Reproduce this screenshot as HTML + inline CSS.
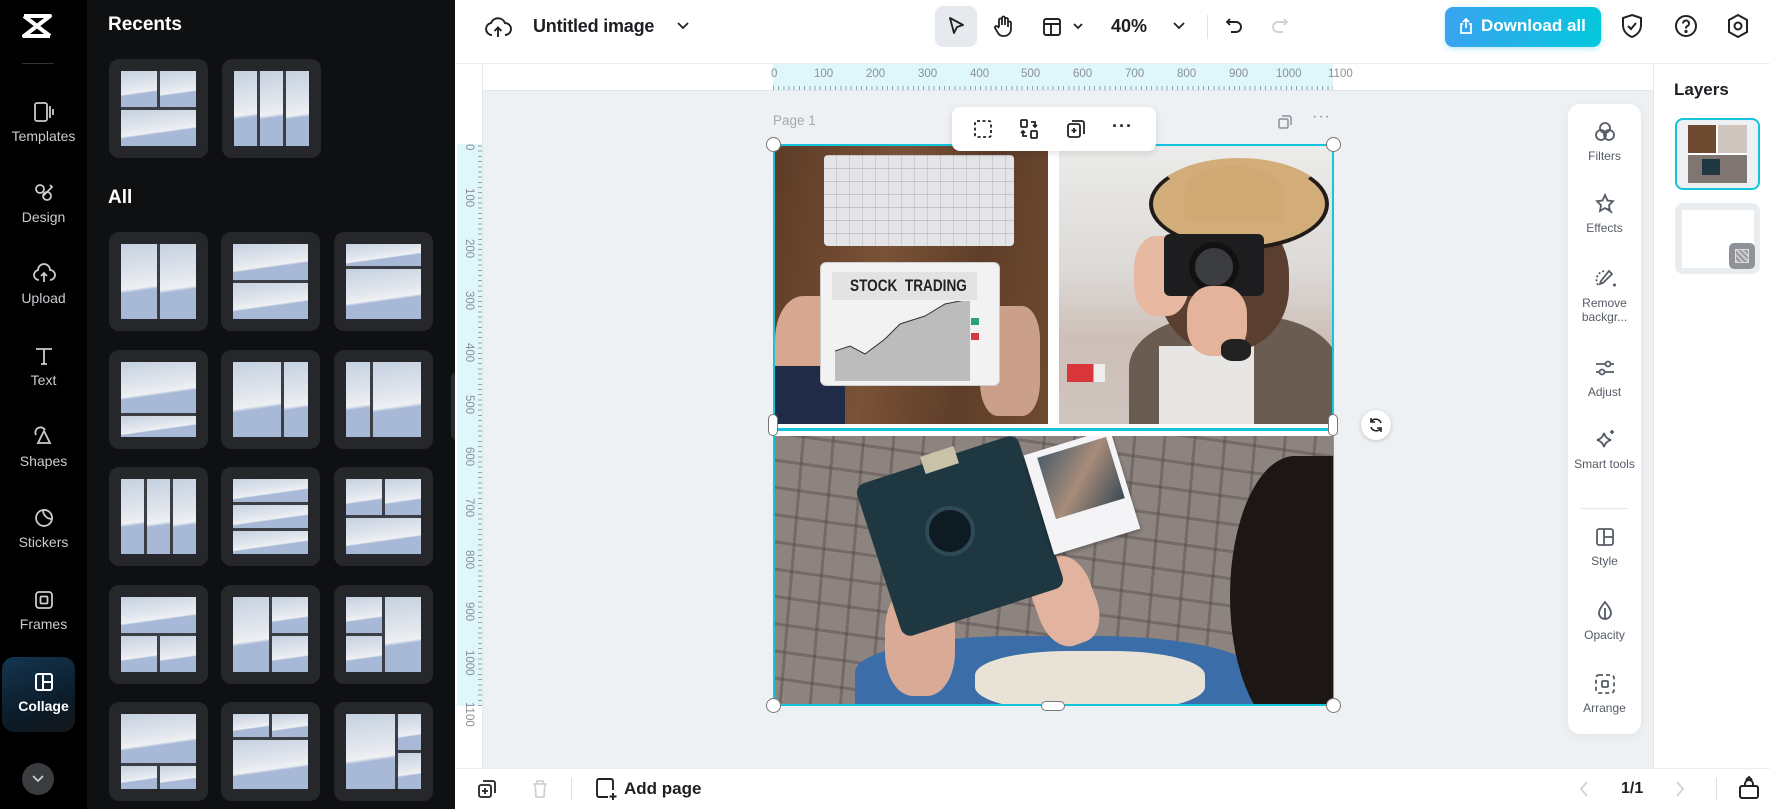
<!DOCTYPE html>
<html><head><meta charset="utf-8"><style>
*{margin:0;padding:0;box-sizing:border-box}
body{width:1770px;height:809px;overflow:hidden;font-family:"Liberation Sans",sans-serif;background:#fff;position:relative}
.a{position:absolute}
#rail{left:0;top:0;width:87px;height:809px;background:#000}
.ri{position:absolute;left:0;width:87px;text-align:center;color:#c9cbd0;font-size:14px}
.ri svg{display:block;margin:0 auto 4px}
#panel{left:87px;top:0;width:368px;height:809px;background:#0f1012}
.t{position:absolute;width:99px;height:99px;background:#26272b;border-radius:10px}
.in{position:absolute;left:12px;top:12px;width:75px;height:75px;background:#3b3e45}
.in i{position:absolute;background:linear-gradient(172deg,#c5d1e0 0%,#e3e7ee 45%,#eef0f3 58%,#a7b9d7 62%,#a7b9d7 100%)}
.ph{position:absolute;overflow:hidden}
.tb{position:absolute;text-align:center;width:73px;left:0;font-size:12px;color:#555b66;line-height:14px}
.tb svg{display:block;margin:0 auto 5px}
.rn{position:absolute;font-size:11.5px;color:#8a9099;top:68px}
</style></head><body>

<div class="a" id="rail">
 <svg class="a" style="left:20px;top:12px" width="34" height="28" viewBox="0 0 34 28"><path d="M4 4h26L4 24h26M4 4l26 20" stroke="#fff" stroke-width="4" fill="none" stroke-linejoin="round"/></svg>
 <div class="a" style="left:22px;top:63px;width:32px;height:1px;background:#333"></div>
 <div class="ri" style="top:100px"><svg width="24" height="24" viewBox="0 0 24 24" fill="none" stroke="#c9cbd0" stroke-width="1.8"><rect x="3" y="3" width="12" height="18" rx="2"/><path d="M18 6v12M21 9v6"/></svg>Templates</div>
 <div class="ri" style="top:181px"><svg width="24" height="24" viewBox="0 0 24 24" fill="none" stroke="#c9cbd0" stroke-width="1.8"><circle cx="8" cy="8" r="4"/><circle cx="15" cy="15" r="4"/><path d="M18 4l2 2-9 9"/></svg>Design</div>
 <div class="ri" style="top:262px"><svg width="24" height="24" viewBox="0 0 24 24" fill="none" stroke="#c9cbd0" stroke-width="1.8"><path d="M7 18a5 5 0 0 1-1-9.9A6 6 0 0 1 18 8a4.5 4.5 0 0 1 0 10M12 20v-8M9 14l3-3 3 3"/></svg>Upload</div>
 <div class="ri" style="top:344px"><svg width="24" height="24" viewBox="0 0 24 24" fill="none" stroke="#c9cbd0" stroke-width="1.8"><path d="M4 5h16M12 5v15M9 20h6"/></svg>Text</div>
 <div class="ri" style="top:425px"><svg width="24" height="24" viewBox="0 0 24 24" fill="none" stroke="#c9cbd0" stroke-width="1.8"><path d="M12 6l6 12H6zM4 10a5 5 0 0 1 9-5"/></svg>Shapes</div>
 <div class="ri" style="top:506px"><svg width="24" height="24" viewBox="0 0 24 24" fill="none" stroke="#c9cbd0" stroke-width="1.8"><path d="M20 13a8 8 0 1 1-9-9c0 5 4 9 9 9zM11 4a8 8 0 0 1 9 9"/></svg>Stickers</div>
 <div class="ri" style="top:588px"><svg width="24" height="24" viewBox="0 0 24 24" fill="none" stroke="#c9cbd0" stroke-width="1.8"><rect x="4" y="4" width="16" height="16" rx="3"/><rect x="8.5" y="8.5" width="7" height="7" rx="1"/></svg>Frames</div>
 <div class="a" style="left:2px;top:657px;width:73px;height:75px;border-radius:12px;background:linear-gradient(160deg,#143550,#0b1a26 70%,#15171a)"></div>
 <div class="ri" style="top:670px;color:#fff;font-weight:bold"><svg width="24" height="24" viewBox="0 0 24 24" fill="none" stroke="#fff" stroke-width="2"><rect x="4" y="4" width="16" height="16" rx="2"/><path d="M11 4v16M11 12h9"/></svg>Collage</div>
 <div class="a" style="left:22px;top:763px;width:32px;height:32px;border-radius:50%;background:#3a3c40"></div>
 <svg class="a" style="left:31px;top:774px" width="14" height="10" viewBox="0 0 14 10"><path d="M2 2l5 5 5-5" stroke="#c9cbd0" stroke-width="1.8" fill="none"/></svg>
</div>

<div class="a" id="panel"></div>
<div class="a" style="left:108px;top:14px;color:#fff;font-weight:bold;font-size:19px">Recents</div>
<div class="a" style="left:108px;top:187px;color:#fff;font-weight:bold;font-size:19px">All</div>

<div class="t" style="left:109px;top:59px"><div class="in"><i style="left:0;top:0;width:36px;height:36px"></i><i style="left:39px;top:0;width:36px;height:36px"></i><i style="left:0;top:39px;width:75px;height:36px"></i></div></div>
<div class="t" style="left:222px;top:59px"><div class="in"><i style="left:0;top:0;width:23px;height:75px"></i><i style="left:26px;top:0;width:23px;height:75px"></i><i style="left:52px;top:0;width:23px;height:75px"></i></div></div>

<div class="t" style="left:109px;top:232px"><div class="in"><i style="left:0;top:0;width:36px;height:75px"></i><i style="left:39px;top:0;width:36px;height:75px"></i></div></div>
<div class="t" style="left:221px;top:232px"><div class="in"><i style="left:0;top:0;width:75px;height:36px"></i><i style="left:0;top:39px;width:75px;height:36px"></i></div></div>
<div class="t" style="left:334px;top:232px"><div class="in"><i style="left:0;top:0;width:75px;height:22px"></i><i style="left:0;top:25px;width:75px;height:50px"></i></div></div>
<div class="t" style="left:109px;top:350px"><div class="in"><i style="left:0;top:0;width:75px;height:51px"></i><i style="left:0;top:54px;width:75px;height:21px"></i></div></div>
<div class="t" style="left:221px;top:350px"><div class="in"><i style="left:0;top:0;width:48px;height:75px"></i><i style="left:51px;top:0;width:24px;height:75px"></i></div></div>
<div class="t" style="left:334px;top:350px"><div class="in"><i style="left:0;top:0;width:24px;height:75px"></i><i style="left:27px;top:0;width:48px;height:75px"></i></div></div>
<div class="t" style="left:109px;top:467px"><div class="in"><i style="left:0;top:0;width:23px;height:75px"></i><i style="left:26px;top:0;width:23px;height:75px"></i><i style="left:52px;top:0;width:23px;height:75px"></i></div></div>
<div class="t" style="left:221px;top:467px"><div class="in"><i style="left:0;top:0;width:75px;height:23px"></i><i style="left:0;top:26px;width:75px;height:23px"></i><i style="left:0;top:52px;width:75px;height:23px"></i></div></div>
<div class="t" style="left:334px;top:467px"><div class="in"><i style="left:0;top:0;width:36px;height:36px"></i><i style="left:39px;top:0;width:36px;height:36px"></i><i style="left:0;top:39px;width:75px;height:36px"></i></div></div>
<div class="t" style="left:109px;top:585px"><div class="in"><i style="left:0;top:0;width:75px;height:36px"></i><i style="left:0;top:39px;width:36px;height:36px"></i><i style="left:39px;top:39px;width:36px;height:36px"></i></div></div>
<div class="t" style="left:221px;top:585px"><div class="in"><i style="left:0;top:0;width:36px;height:75px"></i><i style="left:39px;top:0;width:36px;height:36px"></i><i style="left:39px;top:39px;width:36px;height:36px"></i></div></div>
<div class="t" style="left:334px;top:585px"><div class="in"><i style="left:0;top:0;width:36px;height:36px"></i><i style="left:0;top:39px;width:36px;height:36px"></i><i style="left:39px;top:0;width:36px;height:75px"></i></div></div>
<div class="t" style="left:109px;top:702px"><div class="in"><i style="left:0;top:0;width:75px;height:49px"></i><i style="left:0;top:52px;width:36px;height:23px"></i><i style="left:39px;top:52px;width:36px;height:23px"></i></div></div>
<div class="t" style="left:221px;top:702px"><div class="in"><i style="left:0;top:0;width:36px;height:23px"></i><i style="left:39px;top:0;width:36px;height:23px"></i><i style="left:0;top:26px;width:75px;height:49px"></i></div></div>
<div class="t" style="left:334px;top:702px"><div class="in"><i style="left:0;top:0;width:49px;height:75px"></i><i style="left:52px;top:0;width:23px;height:36px"></i><i style="left:52px;top:39px;width:23px;height:36px"></i></div></div>
<div class="a" style="left:451px;top:372px;width:12px;height:68px;border-radius:6px;background:#2a2c30"></div>

<div class="a" style="left:455px;top:0;width:1315px;height:64px;background:#fff;border-bottom:1px solid #eceef1"></div>
<svg class="a" style="left:484px;top:14px" width="28" height="26" viewBox="0 0 28 26" fill="none" stroke="#222" stroke-width="1.9"><path d="M8 21a6 6 0 0 1-1-11.9A7.5 7.5 0 0 1 21 9a5.5 5.5 0 0 1 0 12M14 23v-9M10.5 17l3.5-3.5 3.5 3.5"/></svg>
<div class="a" style="left:533px;top:16px;font-size:18px;color:#1d1f23;font-weight:bold;letter-spacing:-.2px">Untitled image</div>
<svg class="a" style="left:676px;top:21px" width="14" height="10" viewBox="0 0 14 10"><path d="M2 2l5 5 5-5" stroke="#222" stroke-width="1.8" fill="none"/></svg>
<div class="a" style="left:935px;top:6px;width:42px;height:41px;background:#e6e9ee;border-radius:8px"></div>
<svg class="a" style="left:945px;top:15px" width="22" height="22" viewBox="0 0 22 22"><path d="M5 3l13 7-6 2-3 6z" stroke="#222" stroke-width="1.9" fill="none" stroke-linejoin="round"/></svg>
<svg class="a" style="left:991px;top:14px" width="24" height="24" viewBox="0 0 24 24" fill="none" stroke="#222" stroke-width="1.8"><path d="M8 13V6a1.5 1.5 0 0 1 3 0v5V4a1.5 1.5 0 0 1 3 0v7V5.5a1.5 1.5 0 0 1 3 0V13v-4a1.5 1.5 0 0 1 3 0v6a7 7 0 0 1-7 7h-1a6 6 0 0 1-5-3l-3-5a1.5 1.5 0 0 1 2.5-1.5L8 14"/></svg>
<svg class="a" style="left:1041px;top:16px" width="22" height="22" viewBox="0 0 22 22" fill="none" stroke="#222" stroke-width="1.9"><rect x="3" y="3" width="16" height="16" rx="2"/><path d="M3 8h16M10 8v11"/></svg>
<svg class="a" style="left:1072px;top:22px" width="12" height="9" viewBox="0 0 12 9"><path d="M2 2l4 4 4-4" stroke="#222" stroke-width="1.8" fill="none"/></svg>
<div class="a" style="left:1111px;top:16px;font-size:18px;color:#1d1f23;font-weight:bold">40%</div>
<svg class="a" style="left:1172px;top:21px" width="14" height="10" viewBox="0 0 14 10"><path d="M2 2l5 5 5-5" stroke="#222" stroke-width="1.8" fill="none"/></svg>
<div class="a" style="left:1207px;top:15px;width:1px;height:24px;background:#dde0e4"></div>
<svg class="a" style="left:1223px;top:15px" width="22" height="22" viewBox="0 0 22 22" fill="none" stroke="#222" stroke-width="1.9"><path d="M7 4L4 7l3 3M4 7h9a5 5 0 0 1 0 10H8"/></svg>
<svg class="a" style="left:1269px;top:15px" width="22" height="22" viewBox="0 0 22 22" fill="none" stroke="#cfd2d7" stroke-width="1.9"><path d="M15 4l3 3-3 3M18 7H9a5 5 0 0 0 0 10h5"/></svg>
<div class="a" style="left:1445px;top:7px;width:156px;height:40px;border-radius:8px;background:linear-gradient(90deg,#3aa3f0,#03c8dd);box-shadow:0 2px 6px rgba(0,180,230,.25)"></div>
<svg class="a" style="left:1457px;top:17px" width="18" height="18" viewBox="0 0 18 18" fill="none" stroke="#fff" stroke-width="1.7"><path d="M6 7H4v9h10V7h-2M9 11V2M6 5l3-3 3 3"/></svg>
<div class="a" style="left:1481px;top:16px;font-size:17px;color:#fff;font-weight:bold">Download all</div>
<svg class="a" style="left:1620px;top:13px" width="24" height="26" viewBox="0 0 24 26" fill="none" stroke="#222" stroke-width="2"><path d="M12 2l9 3v7c0 6-4 10-9 12-5-2-9-6-9-12V5z"/><path d="M8 13l3 3 5-6"/></svg>
<svg class="a" style="left:1674px;top:14px" width="24" height="24" viewBox="0 0 24 24" fill="none" stroke="#222" stroke-width="2"><circle cx="12" cy="12" r="10"/><path d="M9 9.5a3 3 0 1 1 4 2.8c-1 .4-1 1.2-1 2.2"/><circle cx="12" cy="17.5" r=".6" fill="#222"/></svg>
<svg class="a" style="left:1726px;top:13px" width="24" height="26" viewBox="0 0 24 26" fill="none" stroke="#222" stroke-width="2"><path d="M12 2l9 5v12l-9 5-9-5V7z"/><circle cx="12" cy="13" r="3.5"/></svg>

<div class="a" style="left:455px;top:64px;width:1198px;height:704px;background:#eef1f4"></div>
<div class="a" style="left:455px;top:64px;width:1198px;height:27px;background:#fff;border-bottom:1px solid #e3e6ea"></div>
<div class="a" style="left:455px;top:64px;width:28px;height:704px;background:#fff;border-right:1px solid #e3e6ea"></div>
<div class="a" style="left:773px;top:64px;width:560px;height:26px;background:#dff6fa;background-image:repeating-linear-gradient(90deg,#9aa3ad 0 1px,transparent 1px 5.18px);background-size:100% 4px;background-repeat:no-repeat;background-position:0 22px"></div>
<div class="a" style="left:457px;top:144px;width:25px;height:562px;background:#dff6fa;background-image:repeating-linear-gradient(0deg,#9aa3ad 0 1px,transparent 1px 5.18px);background-size:4px 100%;background-repeat:no-repeat;background-position:21px 0"></div>
<div class="rn" style="left:771px">0</div><div class="rn" style="left:814px">100</div><div class="rn" style="left:866px">200</div><div class="rn" style="left:918px">300</div><div class="rn" style="left:970px">400</div><div class="rn" style="left:1021px">500</div><div class="rn" style="left:1073px">600</div><div class="rn" style="left:1125px">700</div><div class="rn" style="left:1177px">800</div><div class="rn" style="left:1229px">900</div><div class="rn" style="left:1276px">1000</div><div class="rn" style="left:1328px">1100</div>
<div class="a" style="left:462px;top:150px;width:14px;height:560px;writing-mode:vertical-rl;font-size:11.5px;color:#8a9099;line-height:14px">
<span style="position:absolute;top:-6px">0</span><span style="position:absolute;top:38px">100</span><span style="position:absolute;top:89px">200</span><span style="position:absolute;top:141px">300</span><span style="position:absolute;top:193px">400</span><span style="position:absolute;top:245px">500</span><span style="position:absolute;top:297px">600</span><span style="position:absolute;top:348px">700</span><span style="position:absolute;top:400px">800</span><span style="position:absolute;top:452px">900</span><span style="position:absolute;top:500px">1000</span><span style="position:absolute;top:552px">1100</span>
</div>
<div class="a" style="left:773px;top:113px;font-size:13.5px;color:#a3a9b1">Page 1</div>
<svg class="a" style="left:1276px;top:113px" width="18" height="18" viewBox="0 0 18 18" fill="none" stroke="#8a9099" stroke-width="1.5"><rect x="3" y="6" width="9" height="9" rx="1.5"/><path d="M6 3h7a2 2 0 0 1 2 2v7"/></svg>
<div class="a" style="left:1312px;top:108px;font-size:16px;color:#8a9099;letter-spacing:1px">···</div>

<div class="a" style="left:773px;top:144px;width:561px;height:562px;background:#fff;border:2px solid #14c4dc"></div>
<div class="ph" style="left:775px;top:146px;width:273px;height:278px;background:linear-gradient(100deg,#5c3b26,#7a5236 40%,#5f3e29 70%,#6e4a31)">
 <div class="a" style="left:49px;top:9px;width:190px;height:91px;background:#eceded;border-radius:4px;background-image:repeating-linear-gradient(90deg,#f6f6f7 0 12px,#dcdde0 12px 13px),repeating-linear-gradient(0deg,transparent 0 12px,#dcdde0 12px 13px);background-blend-mode:multiply"></div>
 <div class="a" style="left:0;top:150px;width:70px;height:110px;background:#d7a790;border-radius:40% 30% 20% 20%"></div>
 <div class="a" style="left:-10px;top:220px;width:80px;height:60px;background:#1f2b47"></div>
 <div class="a" style="left:205px;top:160px;width:60px;height:110px;background:#caa08a;border-radius:30%"></div>
 <div class="a" style="left:45px;top:116px;width:180px;height:124px;background:#f2f2f2;border-radius:6px;border:1px solid #ccc"></div>
 <div class="a" style="left:57px;top:126px;width:145px;height:28px;background:#e3e3e3"></div>
 <div class="a" style="left:75px;top:130px;font-size:17px;font-weight:bold;color:#222;transform:scaleX(.8);transform-origin:left">STOCK&nbsp;&nbsp;TRADING</div>
 <svg class="a" style="left:60px;top:155px" width="140" height="80" viewBox="0 0 140 80"><path d="M0 80V50l15-5 15 8 20-15 15-15 25-8 20-12 25-5v82z" fill="#bcbcbc"/><path d="M0 50l15-5 15 8 20-15 15-15 25-8 20-12 25-5" stroke="#333" fill="none"/></svg>
 <div class="a" style="left:196px;top:172px;width:8px;height:7px;background:#28a27c"></div>
 <div class="a" style="left:196px;top:187px;width:8px;height:7px;background:#d23a40"></div>
</div>
<div class="ph" style="left:1059px;top:146px;width:273px;height:278px;background:linear-gradient(180deg,#ececeb 0%,#dcd9d6 45%,#cdbfb7 70%,#d0c5bf)">
 <div class="a" style="left:8px;top:218px;width:38px;height:18px;background:linear-gradient(90deg,#d9363b 0 70%,#eee 70%)"></div>
 <div class="a" style="left:70px;top:170px;width:210px;height:130px;background:#6a5c50;border-radius:40% 40% 0 0"></div>
 <div class="a" style="left:100px;top:200px;width:95px;height:90px;background:#e8e6e4"></div>
 <div class="a" style="left:100px;top:65px;width:130px;height:140px;background:#5a3e30;border-radius:45%"></div>
 <div class="a" style="left:90px;top:12px;width:180px;height:92px;background:#d2ad7a;border-radius:50%;border:4px solid #1f1b17;border-top-color:#d2ad7a"></div>
 <div class="a" style="left:125px;top:20px;width:100px;height:55px;background:#cfa974;border-radius:50% 50% 10% 10%"></div>
 <div class="a" style="left:75px;top:90px;width:55px;height:80px;background:#e7b9a0;border-radius:40%"></div>
 <div class="a" style="left:105px;top:88px;width:100px;height:62px;background:#1d1d1f;border-radius:6px"></div>
 <div class="a" style="left:130px;top:96px;width:50px;height:50px;background:#3a3c40;border-radius:50%;border:6px solid #111"></div>
 <div class="a" style="left:128px;top:140px;width:60px;height:70px;background:#e3b49b;border-radius:40%"></div>
 <div class="a" style="left:162px;top:193px;width:30px;height:22px;background:#222;border-radius:40%"></div>
</div>
<div class="ph" style="left:775px;top:436px;width:558px;height:268px;background:#8d837f;background-image:repeating-linear-gradient(8deg,transparent 0 24px,rgba(70,60,58,.35) 24px 27px),repeating-linear-gradient(95deg,transparent 0 27px,rgba(70,60,58,.35) 27px 30px)">
 <div class="a" style="left:80px;top:200px;width:400px;height:90px;background:#3b6ea8;border-radius:40% 40% 0 0"></div>
 <div class="a" style="left:200px;top:215px;width:230px;height:60px;background:#e9e2d6;border-radius:40%"></div>
 <div class="a" style="left:110px;top:150px;width:70px;height:110px;background:#d9aa96;border-radius:40%"></div>
 <div class="a" style="left:260px;top:120px;width:60px;height:90px;background:#e2b4a0;border-radius:40%;transform:rotate(-20deg)"></div>
 <div class="a" style="left:100px;top:20px;width:170px;height:160px;background:#1f3741;border-radius:10px;transform:rotate(-18deg)"></div>
 <div class="a" style="left:150px;top:70px;width:50px;height:50px;background:#0f1b22;border-radius:50%;border:4px solid #2e4a56"></div>
 <div class="a" style="left:147px;top:15px;width:35px;height:18px;background:#c9c1a8;transform:rotate(-18deg)"></div>
 <div class="a" style="left:262px;top:4px;width:90px;height:104px;background:#f4f4f6;transform:rotate(-17deg);box-shadow:0 2px 4px rgba(0,0,0,.3)"></div>
 <div class="a" style="left:270px;top:10px;width:72px;height:64px;background:linear-gradient(135deg,#4b5e6a,#a88c7a 50%,#3a4a55);transform:rotate(-17deg)"></div>
 <div class="a" style="left:455px;top:20px;width:130px;height:280px;background:#1c1614;border-radius:50% 0 0 50%"></div>
</div>
<div class="a" style="left:775px;top:424px;width:558px;height:12px;background:#fff"></div>
<div class="a" style="left:1048px;top:146px;width:11px;height:278px;background:#fff"></div>
<div class="a" style="left:775px;top:428px;width:558px;height:3px;background:#14c4dc"></div>
<div class="a" style="left:766px;top:137px;width:15px;height:15px;border-radius:50%;background:#fff;border:1px solid #777"></div>
<div class="a" style="left:1326px;top:137px;width:15px;height:15px;border-radius:50%;background:#fff;border:1px solid #777"></div>
<div class="a" style="left:766px;top:698px;width:15px;height:15px;border-radius:50%;background:#fff;border:1px solid #777"></div>
<div class="a" style="left:1326px;top:698px;width:15px;height:15px;border-radius:50%;background:#fff;border:1px solid #777"></div>
<div class="a" style="left:768px;top:414px;width:10px;height:22px;border-radius:5px;background:#fff;border:1px solid #777"></div>
<div class="a" style="left:1328px;top:414px;width:10px;height:22px;border-radius:5px;background:#fff;border:1px solid #777"></div>
<div class="a" style="left:1041px;top:701px;width:24px;height:10px;border-radius:5px;background:#fff;border:1px solid #777"></div>
<div class="a" style="left:1361px;top:410px;width:30px;height:30px;border-radius:50%;background:#fff;box-shadow:0 1px 4px rgba(0,0,0,.2)"></div>
<svg class="a" style="left:1367px;top:416px" width="18" height="18" viewBox="0 0 18 18" fill="none" stroke="#222" stroke-width="1.6"><path d="M14 7a5.5 5.5 0 0 0-10-1M4 11a5.5 5.5 0 0 0 10 1M4 2v4h4M14 16v-4h-4"/></svg>
<div class="a" style="left:952px;top:107px;width:204px;height:44px;background:#fff;border-radius:8px;box-shadow:0 2px 8px rgba(0,0,0,.12)"></div>
<svg class="a" style="left:972px;top:118px" width="22" height="22" viewBox="0 0 22 22" fill="none" stroke="#222" stroke-width="1.8" stroke-dasharray="3 2.5"><rect x="3" y="3" width="16" height="16" rx="2"/></svg>
<svg class="a" style="left:1018px;top:118px" width="22" height="22" viewBox="0 0 22 22" fill="none" stroke="#222" stroke-width="1.8"><rect x="3" y="2" width="6" height="7" rx="1"/><rect x="13" y="13" width="6" height="7" rx="1"/><path d="M13 4h4v5M15 7l2 2 2-2M9 18H5v-5M7 15l-2-2-2 2"/></svg>
<svg class="a" style="left:1065px;top:118px" width="22" height="22" viewBox="0 0 22 22" fill="none" stroke="#222" stroke-width="1.8"><rect x="3" y="6" width="12" height="13" rx="2"/><path d="M7 3h10a2 2 0 0 1 2 2v11M9 10v5M6.5 12.5h5"/></svg>
<div class="a" style="left:1112px;top:116px;font-size:18px;color:#222;font-weight:bold;letter-spacing:1px">···</div>

<div class="a" style="left:1568px;top:104px;width:73px;height:630px;background:#fff;border-radius:12px;box-shadow:0 2px 10px rgba(0,0,0,.06)"></div>
<div class="a" style="left:1568px;top:104px;width:73px;height:630px">
 <div class="tb" style="top:16px"><svg width="24" height="24" viewBox="0 0 24 24" fill="none" stroke="#555b66" stroke-width="1.8"><circle cx="12" cy="8" r="5"/><circle cx="8" cy="15" r="5"/><circle cx="16" cy="15" r="5"/></svg>Filters</div>
 <div class="tb" style="top:88px"><svg width="24" height="24" viewBox="0 0 24 24" fill="none" stroke="#555b66" stroke-width="1.8"><path d="M12 3l2.5 5.5 5.5.7-4 4 1 5.8-5-3-5 3 1-5.8-4-4 5.5-.7zM15 16l4 5"/></svg>Effects</div>
 <div class="tb" style="top:163px"><svg width="24" height="24" viewBox="0 0 24 24" fill="none" stroke="#555b66" stroke-width="1.8"><path d="M5 18a9 9 0 0 1 8-14" stroke-dasharray="2 2"/><path d="M16 4l3 3-9 9-3 1 1-3zM20 18h3M21.5 16.5v3"/></svg>Remove backgr...</div>
 <div class="tb" style="top:252px"><svg width="24" height="24" viewBox="0 0 24 24" fill="none" stroke="#555b66" stroke-width="1.8"><path d="M3 8h18M3 16h18"/><circle cx="15" cy="8" r="2.5" fill="#fff"/><circle cx="9" cy="16" r="2.5" fill="#fff"/></svg>Adjust</div>
 <div class="tb" style="top:324px"><svg width="24" height="24" viewBox="0 0 24 24" fill="none" stroke="#555b66" stroke-width="1.8"><path d="M11 5c1 4 3 6 7 7-4 1-6 3-7 7-1-4-3-6-7-7 4-1 6-3 7-7zM19 2v4M17 4h4"/></svg>Smart tools</div>
 <div class="a" style="left:13px;top:404px;width:47px;height:1px;background:#e3e6ea"></div>
 <div class="tb" style="top:421px"><svg width="24" height="24" viewBox="0 0 24 24" fill="none" stroke="#555b66" stroke-width="1.8"><rect x="4" y="4" width="16" height="16" rx="2"/><path d="M11 4v16M11 12h9"/></svg>Style</div>
 <div class="tb" style="top:495px"><svg width="24" height="24" viewBox="0 0 24 24" fill="none" stroke="#555b66" stroke-width="1.8"><path d="M12 3c4 5 6 8 6 11a6 6 0 0 1-12 0c0-3 2-6 6-11zM12 9v11"/></svg>Opacity</div>
 <div class="tb" style="top:568px"><svg width="24" height="24" viewBox="0 0 24 24" fill="none" stroke="#555b66" stroke-width="1.8"><rect x="3" y="3" width="18" height="18" rx="3" stroke-dasharray="4 3"/><rect x="9" y="9" width="6" height="6" rx="1"/></svg>Arrange</div>
</div>

<div class="a" style="left:1653px;top:64px;width:117px;height:704px;background:#fff;border-left:1px solid #e3e6ea"></div>
<div class="a" style="left:1674px;top:80px;font-size:17px;font-weight:bold;color:#1d1f23">Layers</div>
<div class="a" style="left:1675px;top:118px;width:85px;height:72px;border:2px solid #14c4dc;border-radius:8px;background:#eef1f4"></div>
<div class="a" style="left:1688px;top:125px;width:59px;height:58px;background:#fff"><div class="a" style="left:0;top:0;width:28px;height:28px;background:#6e4a31"></div><div class="a" style="left:30px;top:0;width:29px;height:28px;background:#cfc5bd"></div><div class="a" style="left:0;top:30px;width:59px;height:28px;background:#7f7671"></div><div class="a" style="left:14px;top:34px;width:18px;height:16px;background:#1f3741"></div></div>
<div class="a" style="left:1675px;top:203px;width:85px;height:71px;border-radius:8px;background:#e9edf0"></div>
<div class="a" style="left:1682px;top:210px;width:72px;height:58px;background:#fff"></div>
<div class="a" style="left:1729px;top:243px;width:26px;height:26px;border-radius:5px;background:#8f9397"></div>
<div class="a" style="left:1735px;top:249px;width:14px;height:14px;border:1.5px solid #ddd;background:repeating-linear-gradient(45deg,#ccc 0 2px,#999 2px 4px)"></div>

<div class="a" style="left:455px;top:768px;width:1315px;height:41px;background:#fff;border-top:1px solid #eceef1"></div>
<svg class="a" style="left:476px;top:778px" width="22" height="22" viewBox="0 0 22 22" fill="none" stroke="#222" stroke-width="1.8"><rect x="3" y="7" width="12" height="12" rx="2"/><path d="M7 3h10a2 2 0 0 1 2 2v10M9 10v6M6 13h6"/></svg>
<svg class="a" style="left:529px;top:778px" width="22" height="22" viewBox="0 0 22 22" fill="none" stroke="#cfd2d7" stroke-width="1.8"><path d="M4 6h14M8 6V3h6v3M6 6l1 13h8l1-13"/></svg>
<div class="a" style="left:571px;top:778px;width:1px;height:22px;background:#dde0e4"></div>
<svg class="a" style="left:594px;top:776px" width="24" height="26" viewBox="0 0 24 26" fill="none" stroke="#222" stroke-width="1.9"><path d="M14 21H5a2 2 0 0 1-2-2V5a2 2 0 0 1 2-2h12a2 2 0 0 1 2 2v9M19 17v7M15.5 20.5h7"/></svg>
<div class="a" style="left:624px;top:779px;font-size:17px;font-weight:bold;color:#1d1f23">Add page</div>
<svg class="a" style="left:1577px;top:780px" width="14" height="18" viewBox="0 0 14 18"><path d="M10 2L4 9l6 7" stroke="#cfd2d7" stroke-width="1.8" fill="none"/></svg>
<div class="a" style="left:1621px;top:780px;font-size:16px;font-weight:bold;color:#1d1f23">1/1</div>
<svg class="a" style="left:1673px;top:780px" width="14" height="18" viewBox="0 0 14 18"><path d="M4 2l6 7-6 7" stroke="#cfd2d7" stroke-width="1.8" fill="none"/></svg>
<div class="a" style="left:1716px;top:778px;width:1px;height:22px;background:#dde0e4"></div>
<svg class="a" style="left:1737px;top:775px" width="24" height="26" viewBox="0 0 24 26" fill="none" stroke="#222" stroke-width="2"><rect x="3" y="11" width="18" height="12" rx="2"/><path d="M8 11V9a4 4 0 0 1 8 0v2M9 5l3-3 3 3"/></svg>
</body></html>
